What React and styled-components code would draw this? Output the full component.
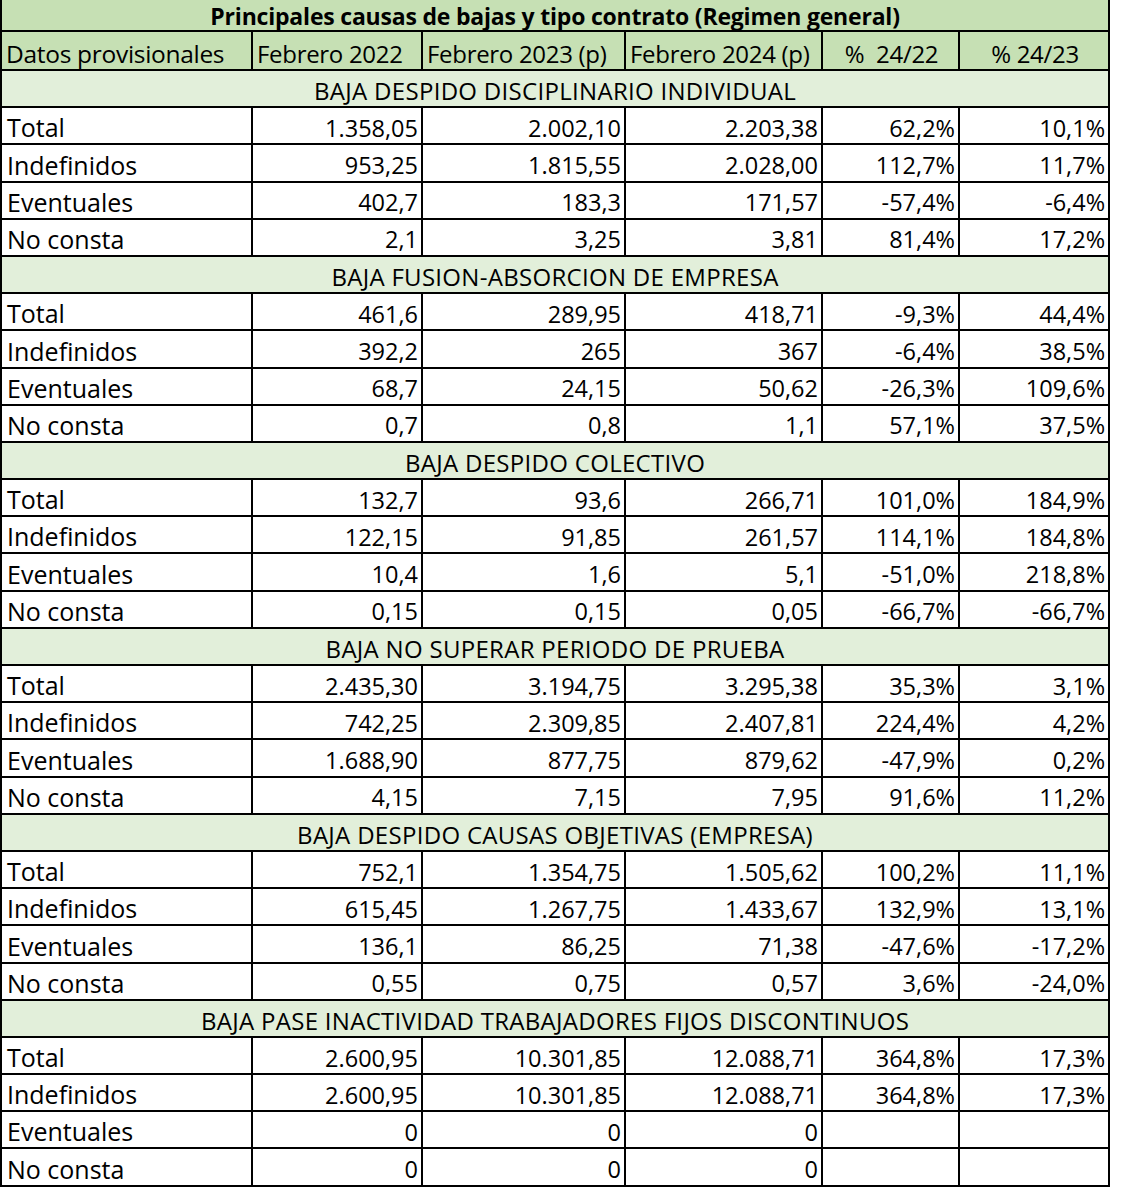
import React from 'react';
import styled, { createGlobalStyle } from 'styled-components';

const GlobalStyle = createGlobalStyle`
  html, body {
    margin: 0;
    padding: 0;
    background: #ffffff;
  }
  body {
    font-family: "Open Sans", "Liberation Sans", sans-serif;
    color: #000;
  }
`;

// Section data: [label, feb22, feb23, feb24, pct22, pct23]
const sections = [
  {
    title: 'BAJA DESPIDO DISCIPLINARIO INDIVIDUAL',
    rows: [
      ['Total', '1.358,05', '2.002,10', '2.203,38', '62,2%', '10,1%'],
      ['Indefinidos', '953,25', '1.815,55', '2.028,00', '112,7%', '11,7%'],
      ['Eventuales', '402,7', '183,3', '171,57', '-57,4%', '-6,4%'],
      ['No consta', '2,1', '3,25', '3,81', '81,4%', '17,2%'],
    ],
  },
  {
    title: 'BAJA FUSION-ABSORCION DE EMPRESA',
    rows: [
      ['Total', '461,6', '289,95', '418,71', '-9,3%', '44,4%'],
      ['Indefinidos', '392,2', '265', '367', '-6,4%', '38,5%'],
      ['Eventuales', '68,7', '24,15', '50,62', '-26,3%', '109,6%'],
      ['No consta', '0,7', '0,8', '1,1', '57,1%', '37,5%'],
    ],
  },
  {
    title: 'BAJA DESPIDO COLECTIVO',
    rows: [
      ['Total', '132,7', '93,6', '266,71', '101,0%', '184,9%'],
      ['Indefinidos', '122,15', '91,85', '261,57', '114,1%', '184,8%'],
      ['Eventuales', '10,4', '1,6', '5,1', '-51,0%', '218,8%'],
      ['No consta', '0,15', '0,15', '0,05', '-66,7%', '-66,7%'],
    ],
  },
  {
    title: 'BAJA NO SUPERAR PERIODO DE PRUEBA',
    rows: [
      ['Total', '2.435,30', '3.194,75', '3.295,38', '35,3%', '3,1%'],
      ['Indefinidos', '742,25', '2.309,85', '2.407,81', '224,4%', '4,2%'],
      ['Eventuales', '1.688,90', '877,75', '879,62', '-47,9%', '0,2%'],
      ['No consta', '4,15', '7,15', '7,95', '91,6%', '11,2%'],
    ],
  },
  {
    title: 'BAJA DESPIDO CAUSAS OBJETIVAS (EMPRESA)',
    rows: [
      ['Total', '752,1', '1.354,75', '1.505,62', '100,2%', '11,1%'],
      ['Indefinidos', '615,45', '1.267,75', '1.433,67', '132,9%', '13,1%'],
      ['Eventuales', '136,1', '86,25', '71,38', '-47,6%', '-17,2%'],
      ['No consta', '0,55', '0,75', '0,57', '3,6%', '-24,0%'],
    ],
  },
  {
    title: 'BAJA PASE INACTIVIDAD TRABAJADORES FIJOS DISCONTINUOS',
    rows: [
      ['Total', '2.600,95', '10.301,85', '12.088,71', '364,8%', '17,3%'],
      ['Indefinidos', '2.600,95', '10.301,85', '12.088,71', '364,8%', '17,3%'],
      ['Eventuales', '0', '0', '0', '', ''],
      ['No consta', '0', '0', '0', '', ''],
    ],
  },
];

const headers = ['Datos provisionales', 'Febrero 2022', 'Febrero 2023 (p)', 'Febrero 2024 (p)', '%  24/22', '% 24/23'];
const widths = [251, 170, 203, 197, 137, 150];

const Sheet = styled.table`
  border-collapse: collapse;
  table-layout: fixed;
  width: 1108px;
  font-size: 23.5px;
  line-height: 1;
`;

const TitleCell = styled.th`
  height: 28px;
  padding: 0 0 2px;
  background: #c6e0b4;
  border: 2px solid #000;
  border-top: none;
  font-size: 23px;
  font-weight: 700;
  text-align: center;
  vertical-align: bottom;
  white-space: nowrap;
  letter-spacing: -0.2px;
`;

const HeadCell = styled.th`
  height: 34px;
  padding: 0 2px 3px 4px;
  background: #c6e0b4;
  border: 2px solid #000;
  font-size: ${(p) => (p.$first ? '24.5px' : '24px')};
  font-weight: 400;
  text-align: ${(p) => (p.$center ? 'center' : 'left')};
  vertical-align: bottom;
  white-space: pre;
  letter-spacing: -0.3px;
`;

const SectionCell = styled.td`
  height: 32.2px;
  padding: 0 0 3px;
  background: #e2efda;
  border: 2px solid #000;
  font-size: 24px;
  text-align: center;
  vertical-align: bottom;
  white-space: nowrap;
  letter-spacing: 0.3px;
`;

const Cell = styled.td`
  height: 32.2px;
  padding: 0 3px 3px 5px;
  background: #fff;
  border: 2px solid #000;
  font-size: ${(p) => (p.$label ? '25px' : '23.5px')};
  text-align: ${(p) => (p.$label ? 'left' : 'right')};
  vertical-align: bottom;
  white-space: nowrap;
`;

export default function App() {
  return (
    <>
      <GlobalStyle />
      <Sheet>
        <colgroup>
          {widths.map((w, i) => (
            <col key={i} style={{ width: w }} />
          ))}
        </colgroup>
        <thead>
          <tr>
            <TitleCell colSpan={6}>Principales causas de bajas y tipo contrato (Regimen general)</TitleCell>
          </tr>
          <tr>
            {headers.map((h, i) => (
              <HeadCell key={h} $first={i === 0} $center={i >= 4}>
                {h}
              </HeadCell>
            ))}
          </tr>
        </thead>
        <tbody>
          {sections.map((s) => (
            <React.Fragment key={s.title}>
              <tr>
                <SectionCell colSpan={6}>{s.title}</SectionCell>
              </tr>
              {s.rows.map((r) => (
                <tr key={s.title + r[0]}>
                  {r.map((v, i) => (
                    <Cell key={i} $label={i === 0}>
                      {v}
                    </Cell>
                  ))}
                </tr>
              ))}
            </React.Fragment>
          ))}
        </tbody>
      </Sheet>
    </>
  );
}
